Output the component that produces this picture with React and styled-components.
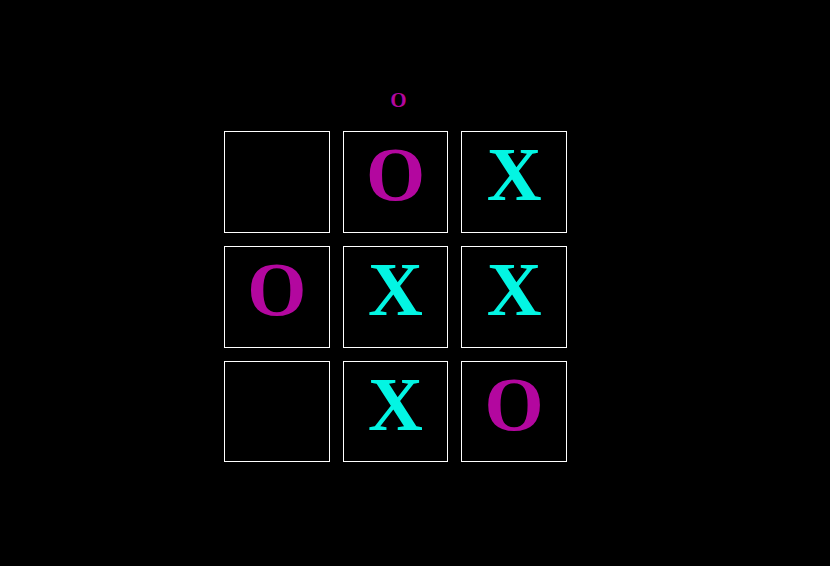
import React from "react";
import styled, { createGlobalStyle } from "styled-components";

const Global = createGlobalStyle`
  html, body { margin: 0; padding: 0; background: #000; }
  body { font-family: "Liberation Serif", "Times New Roman", serif; }
`;

const PURPLE = "#b3079f";
const CYAN = "#03f5e3";

const Page = styled.div`
  width: 830px;
  height: 566px;
  background: #000;
  padding: 88px 0 0 224px;
  box-sizing: border-box;
`;

const Board = styled.div`
  display: inline-flex;
  flex-direction: column;
  align-items: center;
`;

const Status = styled.div`
  font-size: 21px;
  font-weight: bold;
  line-height: 24px;
  height: 24px;
  color: ${PURPLE};
  padding-left: 6px;
  margin-bottom: 19px;
`;

const Grid = styled.div`
  display: grid;
  grid-template-columns: repeat(3, 105.5px);
  grid-auto-rows: 101.7px;
  column-gap: 13.2px;
  row-gap: 13.2px;
`;

const Cell = styled.div`
  box-sizing: border-box;
  border: 1px solid #fff;
  display: flex;
  align-items: center;
  justify-content: center;
  font-size: 76px;
  font-weight: bold;
  line-height: 1;
  color: ${(p) => (p.$mark === "X" ? CYAN : PURPLE)};
  padding-bottom: 16px;
`;

const cells = ["", "O", "X", "O", "X", "X", "", "X", "O"];

export default function App() {
  return (
    <>
      <Global />
      <Page>
        <Board>
          <Status>O</Status>
          <Grid>
            {cells.map((m, i) => (
              <Cell key={i} $mark={m}>
                {m}
              </Cell>
            ))}
          </Grid>
        </Board>
      </Page>
    </>
  );
}
